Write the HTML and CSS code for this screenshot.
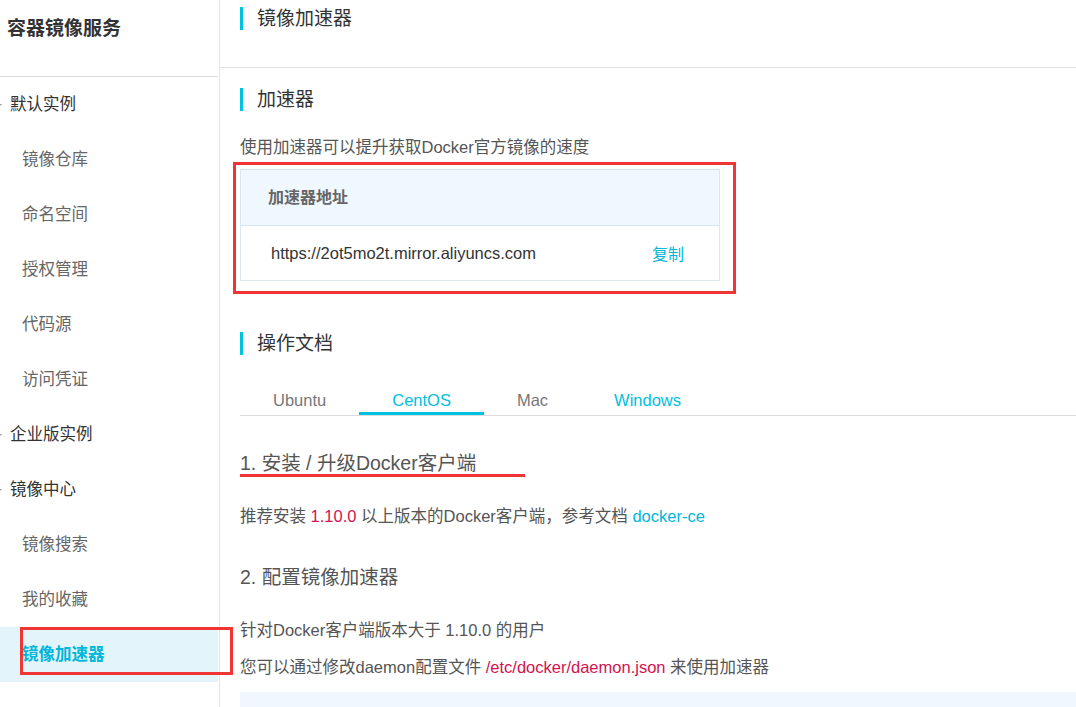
FILE: index.html
```html
<!DOCTYPE html>
<html lang="zh-CN">
<head>
<meta charset="utf-8">
<title>镜像加速器</title>
<link rel="stylesheet" href="styles.css">
</head>
<body>
<div class="app">
  <aside class="sidebar">
    <div class="side-title">容器镜像服务</div>
    <nav class="nav">
      <div class="nav-group">默认实例</div>
      <div class="nav-item">镜像仓库</div>
      <div class="nav-item">命名空间</div>
      <div class="nav-item">授权管理</div>
      <div class="nav-item">代码源</div>
      <div class="nav-item">访问凭证</div>
      <div class="nav-group">企业版实例</div>
      <div class="nav-group">镜像中心</div>
      <div class="nav-item">镜像搜索</div>
      <div class="nav-item">我的收藏</div>
      <div class="nav-item active">镜像加速器<div class="mark"></div></div>
    </nav>
  </aside>
  <main class="main">
    <div class="page-head">
      <h1 class="sec-title head-title">镜像加速器</h1>
    </div>
    <section class="content">
      <h2 class="sec-title first">加速器</h2>
      <p class="desc">使用加速器可以提升获取Docker官方镜像的速度</p>
      <div class="highlight-box">
        <div class="card">
          <div class="card-head">加速器地址</div>
          <div class="card-row">
            <span class="url">https://2ot5mo2t.mirror.aliyuncs.com</span>
            <span class="copy">复制</span>
          </div>
        </div>
      </div>
      <h2 class="sec-title docs">操作文档</h2>
      <div class="tabs">
        <span class="tab">Ubuntu</span>
        <span class="tab active">CentOS</span>
        <span class="tab">Mac</span>
        <span class="tab link">Windows</span>
      </div>
      <h3 class="step step-one">1. 安装 / 升级Docker客户端</h3>
      <div class="red-line"></div>
      <p class="para p1">推荐安装 <span class="hl">1.10.0</span> 以上版本的Docker客户端，参考文档 <span class="link">docker-ce</span></p>
      <h3 class="step step-two">2. 配置镜像加速器</h3>
      <p class="para p2">针对Docker客户端版本大于 1.10.0 的用户</p>
      <p class="para p3">您可以通过修改daemon配置文件 <span class="hl">/etc/docker/daemon.json</span> 来使用加速器</p>
      <div class="code"></div>
    </section>
  </main>
</div>
</body>
</html>
```
FILE: styles.css
```css
* { box-sizing: border-box; }
html, body {
  margin: 0;
  padding: 0;
  height: 707px;
  overflow: hidden;
  background: #fff;
}
body {
  font-family: "Liberation Sans", "Noto Sans CJK SC", sans-serif;
  font-size: 16.5px;
  color: #333;
}
.app {
  display: flex;
  height: 707px;
}

/* sidebar */
.sidebar {
  width: 220px;
  flex: none;
  border-right: 1px solid #e4e4e4;
  position: relative;
  z-index: 2;
  overflow: visible;
}
.side-title {
  height: 77px;
  border-bottom: 1px solid #dcdcdc;
  margin-right: 1px;
  padding-left: 7px;
  line-height: 58px;
  font-size: 19px;
  font-weight: bold;
  color: #333;
}
.nav-group,
.nav-item {
  position: relative;
  height: 55px;
  line-height: 55px;
  font-size: 16.5px;
}
.nav-group {
  padding-left: 10px;
  color: #333;
}
.nav-group::before {
  content: "";
  position: absolute;
  left: -2px;
  top: 27px;
  border-left: 2px solid transparent;
  border-right: 2px solid transparent;
  border-top: 2px solid #999;
}
.nav-item {
  padding-left: 22px;
  color: #666;
}
.nav-item.active {
  background: #e3f5fa;
  color: #00b6d9;
  font-weight: bold;
  margin-right: 1px;
}
.mark {
  position: absolute;
  left: 20px;
  top: 0;
  width: 213px;
  height: 48px;
  border: 3px solid #f03535;
}

/* main */
.main {
  flex: 1;
  min-width: 0;
}
.page-head {
  height: 68px;
  border-bottom: 1px solid #e2e2e2;
  padding-left: 20px;
  padding-top: 7px;
}
.sec-title {
  margin: 0;
  font-size: 19px;
  font-weight: normal;
  line-height: 23px;
  color: #333;
  border-left: 3px solid #00c1de;
  padding-left: 14px;
}
.content {
  padding-left: 20px;
}
.sec-title.first { margin-top: 20px; }
.desc {
  margin: 24px 0 0;
  line-height: 24px;
  color: #555;
}
.highlight-box {
  width: fit-content;
  margin: 3px 0 0 -7px;
  border: 3px solid #f03535;
  padding: 4px 13px 10px 4px;
}
.card {
  width: 480px;
  border: 1px solid #dce6ef;
  border-top-color: #d3e4f5;
}
.card-head {
  height: 56px;
  line-height: 55px;
  padding-left: 27px;
  background: #eff7ff;
  border-bottom: 1px solid #d3e4f5;
  font-weight: bold;
  font-size: 16px;
  color: #666;
}
.card-row {
  height: 54px;
  display: flex;
  align-items: center;
  justify-content: space-between;
  padding: 0 35px 0 30px;
}
.url { color: #333; }
.copy { color: #00b6d9; font-size: 16px; }

.sec-title.docs { margin-top: 38px; }

.tabs {
  display: flex;
  margin-top: 28px;
  border-bottom: 1px solid #dcdcdc;
}
.tab {
  padding: 5px 33px 0;
  line-height: 24px;
  border-bottom: 3px solid transparent;
  color: #777;
}
.tab.active {
  color: #00c1de;
  border-bottom-color: #00c1de;
}
.tab.link { color: #00c1de; }

.step {
  margin: 0;
  font-size: 19.5px;
  font-weight: normal;
  line-height: 22px;
  color: #555;
}
.step-one { margin-top: 36px; }
.red-line {
  width: 285px;
  height: 3px;
  background: #f03535;
}
.para {
  margin: 0;
  line-height: 24px;
  color: #555;
}
.p1 { margin-top: 27px; }
.step-two { margin-top: 38px; }
.p2 { margin-top: 30px; }
.p3 { margin-top: 13px; }
.hl { color: #d3124f; }
.link { color: #00b6d9; }
.code {
  margin-top: 13px;
  height: 200px;
  background: #f0f7fe;
}
```
